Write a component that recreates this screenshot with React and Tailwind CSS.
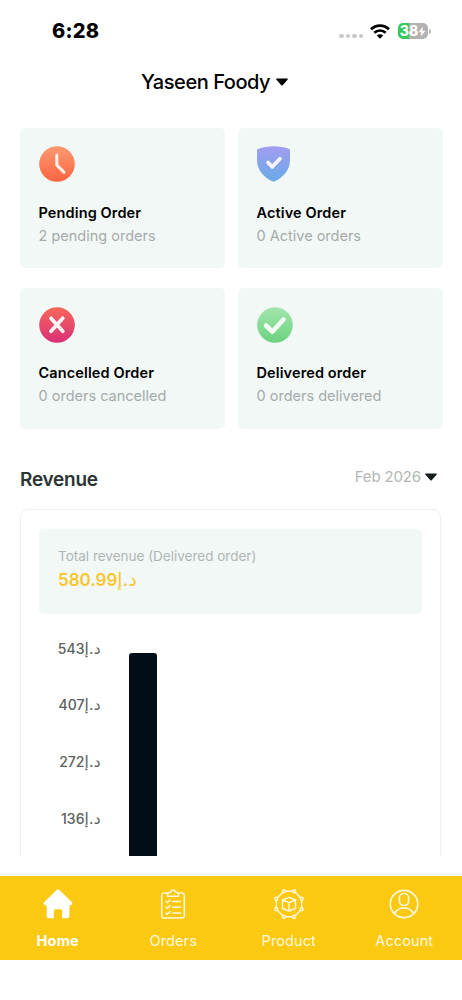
import React from "react";

const PendingIcon = () => (
  <svg width="36" height="36" viewBox="0 0 36 36">
    <defs>
      <linearGradient id="pending" x1="0" y1="0" x2="0" y2="1">
        <stop offset="0" stopColor="#fc9a70" />
        <stop offset="1" stopColor="#fb6440" />
      </linearGradient>
    </defs>
    <circle cx="18" cy="18" r="17.8" fill="url(#pending)" />
    <path d="M17.8 9v10.2l7.2 7" fill="none" stroke="#fff1ea" strokeWidth="3" strokeLinecap="round" strokeLinejoin="round" />
  </svg>
);

const ActiveIcon = () => (
  <svg width="36" height="36" viewBox="0 0 36 36">
    <defs>
      <linearGradient id="active" x1="0" y1="0" x2="0" y2="1">
        <stop offset="0" stopColor="#a29df0" />
        <stop offset="1" stopColor="#68aae8" />
      </linearGradient>
    </defs>
    <path d="M.8 3C10.500-.6 22.500-.6 32.200 3c.5.2.8.5.8 1.100V14c0 10-7 18-16.500 21.800C7 32 0 24 0 14V4.100C0 3.500.3 3.200.8 3z" fill="url(#active)" />
    <path d="M11 16.500l4.300 4.300 7.700-8" fill="none" stroke="#f3f2fd" strokeWidth="3.800" strokeLinecap="round" strokeLinejoin="round" />
  </svg>
);

const CancelledIcon = () => (
  <svg width="36" height="36" viewBox="0 0 36 36">
    <defs>
      <linearGradient id="cancelled" x1="0" y1="0" x2="0" y2="1">
        <stop offset="0" stopColor="#f8685a" />
        <stop offset="1" stopColor="#d92f78" />
      </linearGradient>
    </defs>
    <circle cx="18" cy="18" r="17.8" fill="url(#cancelled)" />
    <path d="M12 11.300l11.800 13M23.800 11.300L12 24.300" fill="none" stroke="#fff5f5" strokeWidth="3.700" strokeLinecap="round" />
  </svg>
);

const DeliveredIcon = () => (
  <svg width="36" height="36" viewBox="0 0 36 36">
    <defs>
      <linearGradient id="delivered" x1="0" y1="0" x2="0" y2="1">
        <stop offset="0" stopColor="#a4e6ae" />
        <stop offset="1" stopColor="#6bd27f" />
      </linearGradient>
    </defs>
    <circle cx="18" cy="18" r="17.8" fill="url(#delivered)" />
    <path d="M9 18.500l6.300 6.200L26.500 12.500" fill="none" stroke="#f1fbf4" strokeWidth="4.600" strokeLinecap="round" strokeLinejoin="round" />
  </svg>
);

const HomeIcon = () => (
  <svg width="30" height="30" viewBox="0 0 30 30" fill="#fff">
    <path d="M13.300 1.200a2.400 2.400 0 0 1 3.400 0l12 11.800c1.300 1.300.5 3.200-1.300 3.200h-1v10.300c0 1.700-1 2.700-2.700 2.700h-4.500v-7c0-1.200-.6-1.900-1.900-1.900h-4.600c-1.300 0-1.900.7-1.900 1.900v7H6.300c-1.700 0-2.700-1-2.700-2.700V16.200h-1c-1.800 0-2.600-1.900-1.300-3.200z" />
  </svg>
);

const OrdersIcon = () => (
  <svg width="30" height="30" viewBox="0 0 30 30" fill="none" stroke="#fff8df" strokeWidth="1.500" strokeLinecap="round" strokeLinejoin="round">
    <path d="M9.500 4H6a2.300 2.300 0 0 0-2.300 2.300v20.400A2.300 2.300 0 0 0 6 29h18a2.300 2.300 0 0 0 2.300-2.300V6.300A2.300 2.300 0 0 0 24 4h-3.500" />
    <path d="M9.500 7.300V5.500c0-1.400 1-2.200 2.500-2.200h.5C12.800 1.800 13.700 1 15 1s2.200.8 2.500 2.300h.5c1.500 0 2.500.8 2.500 2.200v1.800z" />
    <path d="M8 12.300l1.300 1.400L12 11M8 18.100l1.300 1.400 2.700-2.700M8 23.900l1.300 1.400 2.700-2.700M14.500 12.500h8M14.500 18.300h8M14.500 24h8" />
  </svg>
);

const nodes = [
  [9.8, 2.3], [20.2, 2.3], [27.7, 9.8], [27.7, 20.2],
  [20.2, 27.7], [9.8, 27.7], [2.3, 20.2], [2.3, 9.8],
];

const ProductIcon = () => (
  <svg width="30" height="30" viewBox="0 0 30 30" fill="none" stroke="#fff8df" strokeWidth="1.400" strokeLinejoin="round">
    <polygon points={nodes.map((n) => n.join(",")).join(" ")} />
    {nodes.map(([x, y]) => (
      <circle key={`${x}-${y}`} cx={x} cy={y} r="1.500" fill="#fbc812" />
    ))}
    <path d="M15 8.300l6.500 2.700v8.500L15 22l-6.500-2.500V11zM8.500 11l6.500 2.600 6.500-2.600M15 13.600V22" />
  </svg>
);

const AccountIcon = () => (
  <svg width="30" height="30" viewBox="0 0 30 30" fill="none" stroke="#fff8df" strokeWidth="1.700">
    <circle cx="15" cy="15" r="13.700" />
    <rect x="10.400" y="4.500" width="9.200" height="12" rx="4.500" />
    <path d="M5.200 24.500C7.500 21 11 19 15 19s7.500 2 9.800 5.500" />
  </svg>
);

const cards = [
  { title: "Pending Order", text: "2 pending orders", icon: <PendingIcon /> },
  { title: "Active Order", text: "0 Active orders", icon: <ActiveIcon /> },
  { title: "Cancelled Order", text: "0 orders cancelled", icon: <CancelledIcon /> },
  { title: "Delivered order", text: "0 orders delivered", icon: <DeliveredIcon /> },
];

const ticks = [543, 407, 272, 136];

const tabs = [
  { name: "Home", icon: <HomeIcon />, active: true },
  { name: "Orders", icon: <OrdersIcon /> },
  { name: "Product", icon: <ProductIcon /> },
  { name: "Account", icon: <AccountIcon /> },
];

const Dirham = () => <bdi className="font-['DejaVu_Sans',sans-serif] text-[1.1em] font-medium leading-none tracking-[0.2px]">د.إ</bdi>;

const Caret = ({ className }) => (
  <svg width="12" height="8" viewBox="0 0 12 8" className={className}>
    <path d="M1 .5h10c.8 0 1 .6.500 1.200L6.700 7.200c-.4.500-1 .5-1.400 0L.5 1.700C0 1.100.2.500 1 .5z" fill="currentColor" />
  </svg>
);

const StatusBar = () => (
  <div className="flex h-[62px] items-center justify-between pl-[52px] pr-[31px]">
    <span className="text-[20px] font-extrabold leading-6 tracking-[0.2px]">6:28</span>
    <div className="flex items-center">
      <div className="mt-[10px] flex gap-[2px]">
        {[1, 2, 3, 4].map((dot) => (
          <span key={dot} className="size-[4.500px] rounded-full bg-[#c8c8c8]" />
        ))}
      </div>
      <svg width="20" height="15" viewBox="0 0 20 15" className="ml-[7px] mr-px" fill="none" stroke="#000" strokeWidth="2.700">
        <path d="M1 5.300c5-5 13-5 18 0M4.300 8.800c3.200-3.100 8.200-3.100 11.400 0" />
        <path d="M10 14.800l-3.200-3.300c1.800-1.700 4.600-1.700 6.400 0z" fill="#000" stroke="none" />
      </svg>
      <div className="ml-[7px] flex h-4 w-[30px] items-center justify-center rounded-[5px] bg-linear-to-r from-[#34c759] from-38% to-[#b2b2b2] to-38% text-[14px] font-extrabold leading-4 text-white">
        38
        <svg width="8" height="11" viewBox="0 0 8 11">
          <path d="M5 .5L.5 6.300h3L2.700 10.500 7.500 4.700H4.400z" fill="#fff" />
        </svg>
      </div>
      <span className="ml-px h-[5px] w-[2px] rounded-r-full bg-[#b8b8b8]" />
    </div>
  </div>
);

const App = () => {
  return (
    <div className="flex h-[1000px] w-[462px] flex-col overflow-hidden bg-white font-['Inter',sans-serif] text-black">
      <StatusBar />
      <header className="flex h-[65.500px] items-center gap-[6px] pb-[26px] pl-[141px]">
        <h1 className="text-[20px] font-medium leading-6 tracking-[-0.45px]">Yaseen Foody</h1>
        <Caret />
      </header>

      <main className="flex h-[728.500px] flex-col overflow-hidden px-5">
        <div className="-ml-[0.500px] grid w-[423px] grid-cols-2 gap-x-[13px] gap-y-5">
          {cards.map((card) => (
            <div key={card.title} className="h-[140.500px] rounded-[5px] bg-[#f2f8f6] pl-[19px] pt-[18.500px]">
              {card.icon}
              <h2 className="mt-[19.500px] text-[14.500px] font-semibold leading-[22px] tracking-[0.12px]">{card.title}</h2>
              <p className="text-[14.500px] leading-[23px] text-[#a5abaa]">{card.text}</p>
            </div>
          ))}
        </div>

        <div className="mt-[39px] flex h-6 items-center justify-between pr-[5px]">
          <h2 className="text-[19px] font-semibold leading-6 tracking-[-0.25px] text-[#2b3433]">Revenue</h2>
          <div className="mb-[6px] flex items-center gap-1">
            <span className="text-[15px] leading-5 tracking-[-0.150px] text-[#b3b6b6]">Feb 2026</span>
            <Caret className="text-[#171c1c]" />
          </div>
        </div>

        <section className="mt-[17px] h-[420px] w-[421px] shrink-0 rounded-lg border border-[#eff1f1] px-[18px] pt-[19px]">
          <div className="h-[85px] rounded-[5px] bg-[#f2f8f6] pl-[19px] pt-[17px]">
            <p className="text-[13.500px] leading-5 text-[#b0b6b5]">Total revenue (Delivered order)</p>
            <p className="mt-[2px] text-[17px] font-semibold leading-6 tracking-[0.900px] text-[#f8c62c]">
              580.99<Dirham />
            </p>
          </div>
          <div className="flex">
            <div className="mt-[25px] w-[61.500px] text-right text-[14px] font-medium tracking-[0.600px] text-[#5b6160]">
              {ticks.map((tick) => (
                <div key={tick} className="h-[56.700px] whitespace-nowrap leading-5">
                  {tick}<Dirham />
                </div>
              ))}
            </div>
            <div className="ml-[28.500px] mt-[39px] h-[230px] w-[28px] rounded-t-[3px] bg-[#020e17]" />
          </div>
        </section>
      </main>

      <div className="h-5 shrink-0 bg-linear-to-b from-white from-80% to-[#f5f3ec]" />
      <nav className="grid h-[84px] shrink-0 grid-cols-4 bg-[#fbc812]">
        {tabs.map((tab) => (
          <div key={tab.name} className="flex flex-col items-center pt-[13px] text-[14.500px] leading-5 text-[#fff8df]">
            {tab.icon}
            <span className={tab.active ? "mt-[12px] font-bold tracking-[0.2px] text-white" : "mt-[12px] tracking-[0.1px]"}>{tab.name}</span>
          </div>
        ))}
      </nav>
    </div>
  );
};

export default App;
